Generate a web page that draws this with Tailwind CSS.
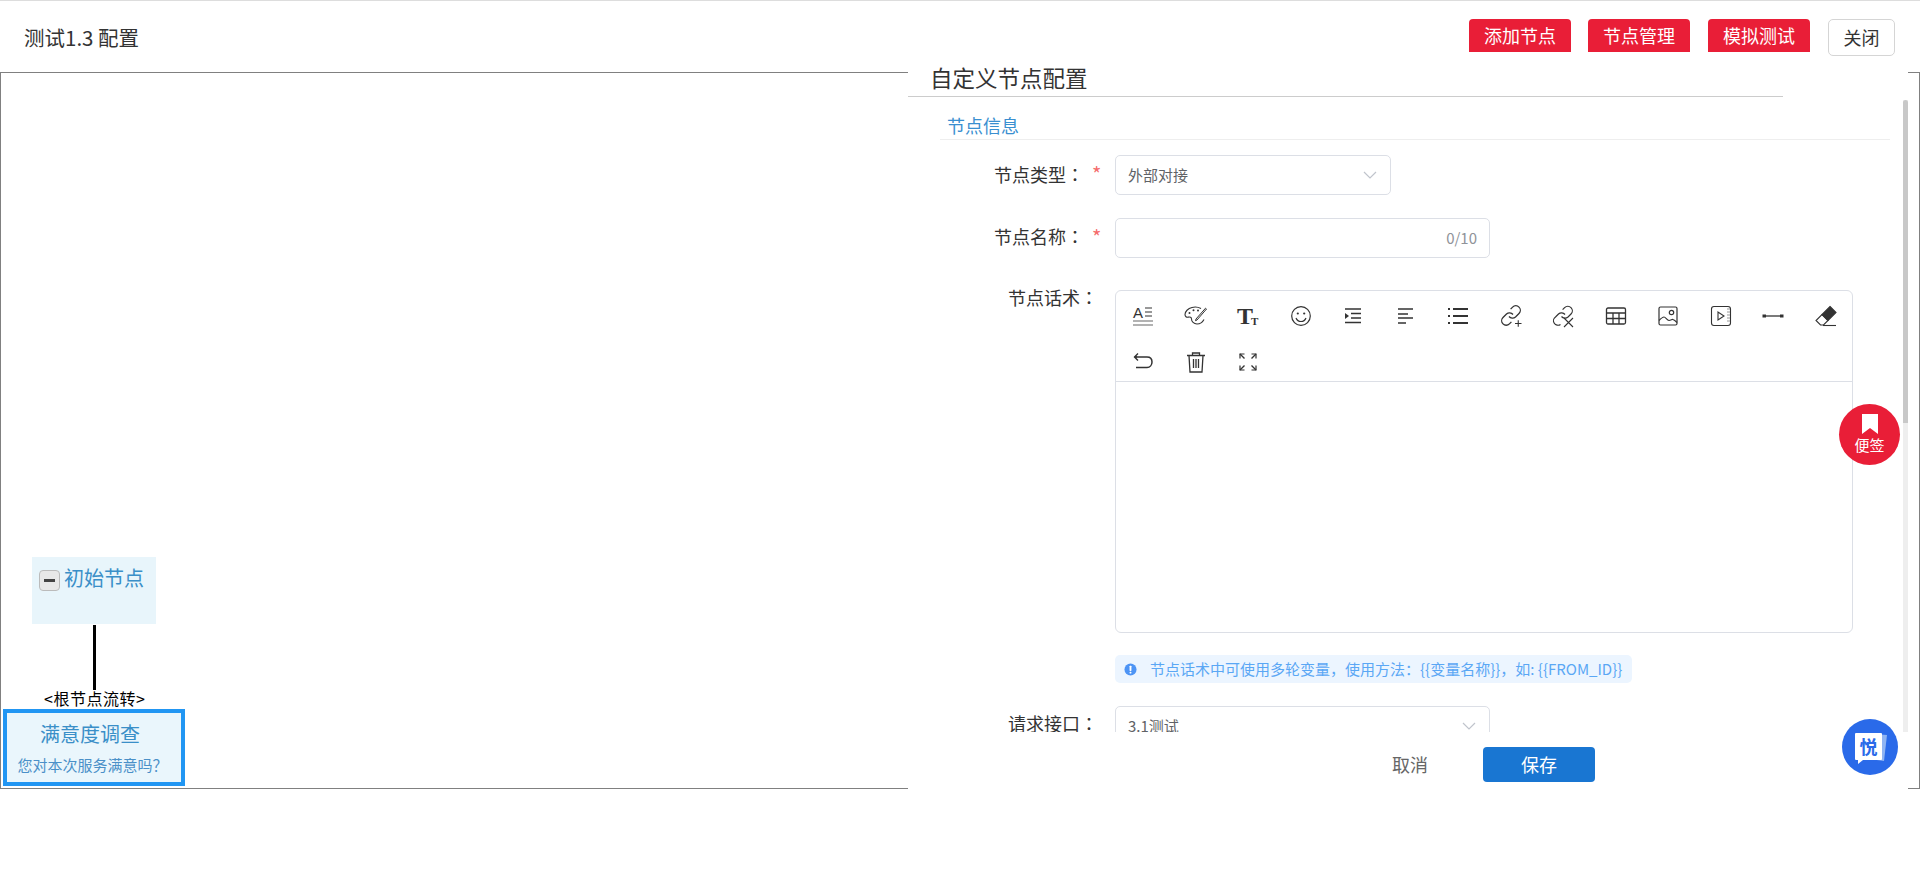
<!DOCTYPE html>
<html lang="zh-CN">
<head>
<meta charset="UTF-8">
<title>测试1.3 配置</title>
<script src="https://cdn.jsdelivr.net/npm/@tailwindcss/browser@4"></script>
</head>
<body class="bg-white overflow-hidden font-['Noto_Sans_CJK_SC',sans-serif]">
<div class="relative w-[1920px] h-[895px] overflow-hidden border-t border-[#dddddd]">

  <!-- top bar -->
  <div class="h-[71px] flex items-start justify-between pl-[24px] pr-[25px] pt-[18px]">
    <div class="text-[20.5px] leading-[36px] text-[#333333]">测试1.3 配置</div>
    <div class="flex items-start">
      <button class="w-[102px] h-[33px] bg-[#e91e37] rounded-t-[4px] text-white text-[18px] leading-[33px]">添加节点</button>
      <button class="w-[102px] h-[33px] ml-[17px] bg-[#e91e37] rounded-t-[4px] text-white text-[18px] leading-[33px]">节点管理</button>
      <button class="w-[102px] h-[33px] ml-[18px] bg-[#e91e37] rounded-t-[4px] text-white text-[18px] leading-[33px]">模拟测试</button>
      <button class="w-[67px] h-[37px] ml-[18px] border border-[#d5d5d5] rounded-[5px] bg-white text-[#333333] text-[18px] leading-[35px]">关闭</button>
    </div>
  </div>

  <!-- tree canvas -->
  <div class="relative h-[717px] border border-[#808080]">
    <div class="absolute left-[31px] top-[484px] w-[124px] h-[67px] bg-[#e8f5fb]">
      <div class="flex items-start pl-[7px] pt-[6px]">
        <span class="w-[21px] h-[21px] mt-[7px] flex items-center justify-center bg-[#e8e8e8] border border-[#bbbbbb] rounded-[4px]"><span class="w-[11px] h-[3px] bg-[#444444]"></span></span>
        <span class="ml-[4px] text-[20px] leading-[30px] text-[#3a8fc8]">初始节点</span>
      </div>
    </div>
    <div class="absolute left-[92px] top-[552px] w-[3px] h-[65px] bg-black"></div>
    <div class="absolute left-[43px] top-[614px] text-[16px] leading-[22px] tracking-[0.5px] text-black whitespace-nowrap">&lt;根节点流转&gt;</div>
    <div class="absolute left-[2px] top-[636px] w-[182px] h-[77px] border-[4px] border-[#2196f3] bg-[#eaf6fc] text-center pr-[8px]">
      <div class="text-[20px] leading-[28px] mt-[7px] text-[#3a8fc8]">满意度调查</div>
      <div class="text-[15px] leading-[22px] mt-[6px] ml-[5px] text-[#4a90c8] whitespace-nowrap">您对本次服务满意吗？</div>
    </div>
  </div>

  <!-- drawer -->
  <div class="absolute left-[908px] top-[58px] w-[1000px] h-[732px] bg-white flex flex-col">
    <div class="w-[875px] h-[38px] border-b border-[#cccccc] pl-[22px] text-[22.5px] leading-[36px] text-[#333333]">自定义节点配置</div>

    <div class="relative flex-1 overflow-hidden">
      <div class="ml-[32px] w-[950px] mt-[15px] h-[28px] border-b border-[#eeeeee] pl-[7px] text-[18px] leading-[27px] text-[#3a8fd0]">节点信息</div>

      <div class="ml-[32px] mt-[15px] flex items-start h-[40px]">
        <div class="w-[144px] text-right text-[18px] leading-[38px] text-[#333333]">节点类型<span lang="zh-TW" class="font-['Noto_Sans_CJK_TC']">：</span></div>
        <div class="w-[31px] pl-[8px] text-[20px] leading-[38px] text-[#f56c6c]">*</div>
        <div class="w-[276px] h-[40px] border border-[#dcdfe6] rounded-[5px] flex items-center justify-between pl-[12px] pr-[12px]">
          <span class="text-[15px] text-[#606266]">外部对接</span>
          <svg class="w-[16px] h-[16px]" viewBox="0 0 16 16" fill="none" stroke="#c0c4cc" stroke-width="1.2"><path d="M2 5l6 6 6-6"/></svg>
        </div>
      </div>

      <div class="ml-[32px] mt-[23px] flex items-start h-[40px]">
        <div class="w-[144px] text-right text-[18px] leading-[36px] text-[#333333]">节点名称<span lang="zh-TW" class="font-['Noto_Sans_CJK_TC']">：</span></div>
        <div class="w-[31px] pl-[8px] text-[20px] leading-[38px] text-[#f56c6c]">*</div>
        <div class="w-[375px] h-[40px] border border-[#dcdfe6] rounded-[5px] flex items-center justify-end pr-[12px]">
          <span class="text-[15px] text-[#909399]">0/10</span>
        </div>
      </div>

      <div class="ml-[32px] mt-[32px] flex items-start">
        <div class="w-[158px] text-right text-[18px] leading-[14px] text-[#333333]">节点话术<span lang="zh-TW" class="font-['Noto_Sans_CJK_TC']">：</span></div>
        <div class="w-[17px]"></div>
        <div class="w-[738px] h-[343px] border border-[#dcdfe6] rounded-[6px]">
          <div class="h-[91px] border-b border-[#dcdfe6] pt-[2px] pl-[1px] flex flex-wrap content-start">
            <!-- row 1 -->
            <span class="w-[52.5px] h-[46px] flex items-center justify-center">
              <svg width="24" height="24" viewBox="0 0 24 24" fill="none" stroke="#333" stroke-width="1.2"><text x="2" y="14" font-size="15" font-family="Liberation Sans" fill="#333" stroke="none">A</text><path d="M14 4h7M14 8h7M14 12h7"/><path d="M2 17h20M2 21h20" stroke="#999" stroke-width="1.5"/></svg>
            </span>
            <span class="w-[52.5px] h-[46px] flex items-center justify-center">
              <svg width="24" height="24" viewBox="0 0 24 24" fill="none" stroke="#333" stroke-width="1.1"><path d="M17 4.500C14.500 3.200 11 2.700 8 3.500 4 4.500 1 7.500 1 10.500c0 2 1.500 3 3.200 2.600 1.800-.4 3.300 0 3.300 1.800 0 2.500 2.300 5.100 5.500 5.100 3 0 5.500-1.600 7-4.500"/><path d="M22.500 5L13 16l-1.500.7.500-1.700L21.500 4.200z" stroke-width="1"/><circle cx="5.500" cy="9" r="1" fill="#333" stroke="none"/><circle cx="9.500" cy="6.300" r="1" fill="#333" stroke="none"/><circle cx="14" cy="6.500" r="1" fill="#333" stroke="none"/></svg>
            </span>
            <span class="w-[52.5px] h-[46px] flex items-center justify-center">
              <svg width="24" height="24" viewBox="0 0 24 24"><text x="1" y="20" font-size="24" font-weight="700" font-family="Liberation Serif" fill="#333">T</text><text x="15" y="21" font-size="11" font-weight="700" font-family="Liberation Serif" fill="#333">T</text></svg>
            </span>
            <span class="w-[52.5px] h-[46px] flex items-center justify-center">
              <svg width="24" height="24" viewBox="0 0 24 24" fill="none" stroke="#333" stroke-width="1.200"><circle cx="12" cy="12" r="9.300"/><circle cx="8.800" cy="9.500" r="1.100" fill="#333" stroke="none"/><circle cx="15.200" cy="9.500" r="1.100" fill="#333" stroke="none"/><path d="M7 14c1 2.500 3 3.500 5 3.500s4-1 5-3.500"/></svg>
            </span>
            <span class="w-[52.5px] h-[46px] flex items-center justify-center">
              <svg width="24" height="24" viewBox="0 0 24 24" fill="none" stroke="#333" stroke-width="1.500"><path d="M4 5h16M10 9.500h10M10 14h10M4 18.500h16"/><path d="M4 9l4 3-4 3z" fill="#333" stroke="none"/></svg>
            </span>
            <span class="w-[52.5px] h-[46px] flex items-center justify-center">
              <svg width="24" height="24" viewBox="0 0 24 24" fill="none" stroke="#333" stroke-width="1.600"><path d="M4 5h15M4 10h10M4 14h15M4 19h8"/></svg>
            </span>
            <span class="w-[52.5px] h-[46px] flex items-center justify-center">
              <svg width="24" height="24" viewBox="0 0 24 24" fill="none" stroke="#333" stroke-width="2"><path d="M7 5h15M7 12h15M7 19h15"/><path d="M2 5h2M2 12h2M2 19h2"/></svg>
            </span>
            <span class="w-[52.5px] h-[46px] flex items-center justify-center">
              <svg width="24" height="24" viewBox="0 0 24 24" fill="none" stroke="#333" stroke-width="1.300"><path d="M10 12.500a4.500 4.500 0 0 0 6.500.5l3.500-3.500a4.500 4.500 0 0 0-6.400-6.400l-2 2"/><path d="M14 10.500a4.500 4.500 0 0 0-6.500-.5L4 13.500a4.500 4.500 0 0 0 6.400 6.400l2-2"/><path d="M16 19.500h6.500M19.250 16.200v6.600" stroke-width="1.100"/></svg>
            </span>
            <span class="w-[52.5px] h-[46px] flex items-center justify-center">
              <svg width="24" height="24" viewBox="0 0 24 24" fill="none" stroke="#333" stroke-width="1.200"><path d="M10.500 12.500a4.500 4.500 0 0 0 6.500.5l3-3a4.500 4.500 0 0 0-6.400-6.400l-2 2"/><path d="M14 10.500a4.500 4.500 0 0 0-6.500-.5L4.500 13a4.500 4.500 0 0 0 5 7.500"/><path d="M13 14l9 9M22 14l-9 9" stroke-width="1.100"/></svg>
            </span>
            <span class="w-[52.5px] h-[46px] flex items-center justify-center">
              <svg width="24" height="24" viewBox="0 0 24 24" fill="none" stroke="#333" stroke-width="1.300"><rect x="2.500" y="4" width="19" height="16" rx="1.500"/><path d="M2.500 9h19M2.500 14.500h19M9 9v11M15 9v11"/></svg>
            </span>
            <span class="w-[52.5px] h-[46px] flex items-center justify-center">
              <svg width="24" height="24" viewBox="0 0 24 24" fill="none" stroke="#333" stroke-width="1.200"><rect x="3" y="3" width="18" height="18" rx="1.500"/><circle cx="15.500" cy="8.500" r="2.200"/><path d="M3 16.500c2-2 3.500-3.500 5-3.500s3 3 5 3.500c2 0 3-1.500 4-1 1.500.5 3 2 4 3"/></svg>
            </span>
            <span class="w-[52.5px] h-[46px] flex items-center justify-center">
              <svg width="24" height="24" viewBox="0 0 24 24" fill="none" stroke="#333" stroke-width="1.100"><rect x="2.500" y="2.500" width="19" height="19" rx="2.500"/><path d="M9 8v8l6-4z"/><path d="M18 5h3M18 8h3M18 11h3M18 14h3M18 17h3" stroke="#999"/></svg>
            </span>
            <span class="w-[52.5px] h-[46px] flex items-center justify-center">
              <svg width="24" height="24" viewBox="0 0 24 24" fill="none" stroke="#333" stroke-width="1.300"><path d="M3 12h18"/><rect x="1.500" y="10.500" width="3.500" height="3" fill="#333" stroke="none"/><rect x="19" y="10.500" width="3.500" height="3" fill="#333" stroke="none"/></svg>
            </span>
            <span class="w-[52.5px] h-[46px] flex items-center justify-center">
              <svg width="24" height="24" viewBox="0 0 24 24" fill="none" stroke="#333" stroke-width="1.100"><path d="M16 2.500l6 6-8 8-6-6z" fill="#333"/><path d="M8 10.500l6 6-4.500 4.500h-3L2 16.500z"/><path d="M9 21.500h13"/></svg>
            </span>
            <!-- row 2 -->
            <span class="w-[52.5px] h-[46px] flex items-center justify-center">
              <svg width="24" height="24" viewBox="0 0 24 24" fill="none" stroke="#333" stroke-width="1.500"><path d="M4 7h12c3 0 5 2 5 5s-2 5.500-5 5.500H5"/><path d="M3 7h3M7 3.500L3.500 7 7 10.500" stroke-width="1.400"/></svg>
            </span>
            <span class="w-[52.5px] h-[46px] flex items-center justify-center">
              <svg width="24" height="24" viewBox="0 0 24 24" fill="none" stroke="#333" stroke-width="1.300"><path d="M3 5.500h18M8.500 5.500V3h7v2.500"/><path d="M5 5.500l1 16.500h12l1-16.500"/><path d="M9.500 9v9M12 9v9M14.500 9v9"/></svg>
            </span>
            <span class="w-[52.5px] h-[46px] flex items-center justify-center">
              <svg width="24" height="24" viewBox="0 0 24 24" fill="none" stroke="#333" stroke-width="1.400"><path d="M4 4l4.500 4.500M20 4l-4.500 4.500M4 20l4.500-4.500M20 20l-4.500-4.500"/><path d="M4 8.500V4h4.500M20 8.500V4h-4.500M4 15.500V20h4.500M20 15.500V20h-4.500" stroke-width="1.200"/></svg>
            </span>
          </div>
        </div>
      </div>

      <div class="ml-[207px] mt-[22px] w-[517px] h-[28px] bg-[#ecf5ff] rounded-[5px] flex items-center pl-[9px]">
        <svg class="w-[13px] h-[13px]" viewBox="0 0 14 14"><circle cx="7" cy="7" r="6.500" fill="#4d94f5"/><rect x="6" y="3" width="2" height="5.500" rx=".5" fill="#fff"/><rect x="6" y="9.500" width="2" height="1.800" rx=".5" fill="#fff"/></svg>
        <span class="ml-[13px] text-[15px] text-[#5aa7f5] whitespace-nowrap">节点话术中可使用多轮变量，使用方法：{{变量名称}}，如: {{FROM_ID}}</span>
      </div>

      <div class="ml-[32px] mt-[23px] flex items-start h-[40px]">
        <div class="w-[158px] text-right text-[18px] leading-[34px] text-[#333333]">请求接口<span lang="zh-TW" class="font-['Noto_Sans_CJK_TC']">：</span></div>
        <div class="w-[17px]"></div>
        <div class="w-[375px] h-[40px] border border-[#dcdfe6] rounded-[5px] flex items-center justify-between pl-[12px] pr-[12px]">
          <span class="text-[15px] text-[#606266]">3.1测试</span>
          <svg class="w-[16px] h-[16px]" viewBox="0 0 16 16" fill="none" stroke="#c0c4cc" stroke-width="1.2"><path d="M2 5l6 6 6-6"/></svg>
        </div>
      </div>

      <!-- scrollbar -->
      <div class="absolute right-0 top-[3px] bottom-0 w-[5px] bg-[#eeeeee]">
        <div class="h-[323px] bg-[#c8c8c8] rounded-t-[3px]"></div>
      </div>
    </div>

    <div class="h-[59px] flex items-start pl-[466px] pt-[15px] bg-white">
      <button class="w-[72px] h-[35px] text-[18px] leading-[35px] text-[#666666]">取消</button>
      <button class="w-[112px] h-[35px] ml-[37px] rounded-[4px] bg-[#1976d2] text-[18px] leading-[35px] text-white">保存</button>
    </div>
  </div>

  <!-- floating note button -->
  <div class="absolute left-[1839px] top-[403px] w-[61px] h-[61px] rounded-full bg-[#e91e37] flex flex-col items-center">
    <svg class="mt-[10px]" width="16" height="20" viewBox="0 0 16 20"><path d="M0 0h16v20l-8-6-8 6z" fill="#fff"/></svg>
    <span class="mt-[2px] text-[15px] leading-[18px] text-white">便签</span>
  </div>

  <!-- floating chat button -->
  <div class="absolute left-[1842px] top-[718px] w-[56px] h-[56px] rounded-full bg-[#2a6ae9]">
    <svg width="56" height="56" viewBox="0 0 56 56"><path d="M20 14l25 2-3 26-22-3z" fill="#8fb4f3"/><path d="M14 14h25a1 1 0 0 1 1 1v25a1 1 0 0 1-1 1H21l-5 4v-4h-2a1 1 0 0 1-1-1V15a1 1 0 0 1 1-1z" fill="#fff"/><text x="26.500" y="35" text-anchor="middle" font-size="18" font-weight="700" font-family="Noto Sans CJK SC" fill="#2a6ae9">悦</text></svg>
  </div>
</div>
</body>
</html>
